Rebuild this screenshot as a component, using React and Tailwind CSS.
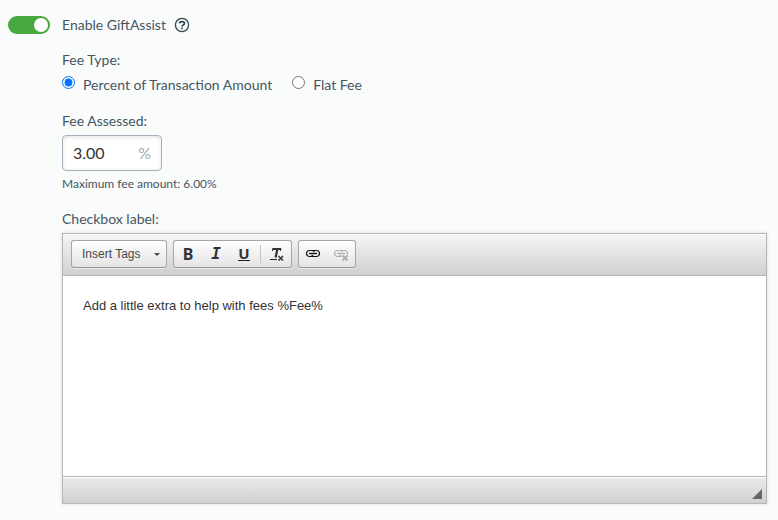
import React, { useState } from "react";

const ToolGroup = ({ children }) => (
  <div className="flex h-7 items-center rounded-[3px] border border-[#a6a6a6] border-b-[#979797] bg-gradient-to-b from-white to-[#e4e4e4] shadow-[0_1px_0_rgba(255,255,255,0.5)]">
    {children}
  </div>
);

const ToolButton = ({ label, disabled, children }) => (
  <button
    type="button"
    aria-label={label}
    disabled={disabled}
    className="flex h-6 w-7 items-center justify-center text-[#333] disabled:opacity-35"
  >
    {children}
  </button>
);

const ChainIcon = ({ broken }) => (
  <svg className="h-4 w-4" viewBox="0 0 16 16" fill="none" stroke="currentColor">
    <path
      d="M7 4.5H4A3 3 0 0 0 1.5 7.5A3 3 0 0 0 4 10.5H7Q8 10.5 8.6 9.8M9 10.5H12A3 3 0 0 0 14.5 7.5A3 3 0 0 0 12 4.5H9Q8 4.5 7.4 5.2M7 4.5Q8.6 4.5 9.3 6M9 10.5Q7.4 10.5 6.7 9"
      stroke={broken ? "currentColor" : "#111"}
      strokeWidth="1.2"
    />
    <path d="M4 7.5h8" stroke={broken ? "currentColor" : "#111"} strokeWidth="1.4" />
    {broken && (
      <>
        <path d="M8.5 8.5h7v6h-7z" fill="#f0f0f0" stroke="none" />
        <path d="M9.5 9.5l5 5M14.5 9.5l-5 5" strokeWidth="1.8" />
      </>
    )}
  </svg>
);

const Editor = () => {
  const [text, setText] = useState("Add a little extra to help with fees %Fee%");

  return (
    <div className="mt-1 border border-[#b6b6b6] bg-white font-['Liberation_Sans',Arial,sans-serif] shadow-[0_0_3px_rgba(0,0,0,0.15)]">
      {/* Toolbar */}
      <div className="flex flex-wrap gap-1.5 border-b border-[#b6b6b6] bg-gradient-to-b from-[#f5f5f5] to-[#cfd1cf] px-2 pt-1.5 pb-[7px] shadow-[inset_0_1px_0_#fff]">
        <ToolGroup>
          <button
            type="button"
            className="flex h-6 w-[94px] items-center justify-between pr-1.5 pl-2.5 text-xs text-[#474747]"
          >
            Insert Tags
            <svg className="h-[3px] w-[6px]" viewBox="0 0 6 3" fill="#474747">
              <path d="M0 0h6L3 3z" />
            </svg>
          </button>
        </ToolGroup>

        <ToolGroup>
          <ToolButton label="Bold">
            <span className="font-['Noto_Sans',sans-serif] text-base leading-5 font-bold">
              B
            </span>
          </ToolButton>
          <ToolButton label="Italic">
            <span className="font-['DejaVu_Sans_Mono',monospace] text-base leading-5 font-bold italic">
              I
            </span>
          </ToolButton>
          <ToolButton label="Underline">
            <span className="h-[14px] border-b border-[#222] font-['Noto_Sans',sans-serif] text-[15px] leading-3 font-bold">
              U
            </span>
          </ToolButton>
          <span className="mx-0.5 h-[18px] w-px bg-[#c4c4c4]" />
          <ToolButton label="Remove Format">
            <svg className="h-4 w-4" viewBox="0 0 16 16" fill="none" stroke="currentColor">
              <path d="M3.5 3h8.5M8.4 3L6.6 11.5" strokeWidth="2.2" />
              <path d="M4 2.5L3.4 5M12 2.5L11.4 5" strokeWidth="1" />
              <path d="M1 13.5h7" stroke="#222" strokeWidth="1" />
              <path d="M9.5 10l4.5 4.5M14 10L9.5 14.5" strokeWidth="1.5" />
            </svg>
          </ToolButton>
        </ToolGroup>

        <ToolGroup>
          <ToolButton label="Link">
            <ChainIcon />
          </ToolButton>
          <ToolButton label="Unlink" disabled>
            <ChainIcon broken />
          </ToolButton>
        </ToolGroup>
      </div>

      <textarea
        id="checkbox-label"
        value={text}
        onChange={(e) => setText(e.target.value)}
        className="block h-[200px] w-full resize-none bg-white p-5 text-[13px] leading-5 text-[#333] outline-none"
      />

      {/* Resize bar */}
      <div className="flex h-[27px] items-end justify-end border-t border-[#b6b6b6] bg-gradient-to-b from-[#ebebeb] to-[#cfd1cf] pr-1 pb-1 shadow-[inset_0_1px_0_#fff]">
        <svg className="h-[10px] w-[10px]" viewBox="0 0 10 10" fill="#666">
          <path d="M10 0v10H0z" />
        </svg>
      </div>
    </div>
  );
};

const App = () => {
  const [enabled, setEnabled] = useState(true);
  const [feeType, setFeeType] = useState("percent");
  const [fee, setFee] = useState("3.00");

  return (
    <main className="min-h-screen bg-[#fafcfb] pt-[15px] pr-[11px] pb-4 pl-2 font-['Lato',sans-serif] text-sm leading-5 text-[#455663]">
      {/* Enable switch */}
      <div className="flex h-5 items-center">
        <label className="flex cursor-pointer items-center gap-3">
          <input
            type="checkbox"
            role="switch"
            checked={enabled}
            onChange={(e) => setEnabled(e.target.checked)}
            className="peer sr-only"
          />
          <span className="flex h-[18px] w-[42px] items-center justify-start rounded-full bg-[#b8bfc4] px-0.5 peer-checked:justify-end peer-checked:bg-[#46a83f]">
            <span className="h-[14px] w-[14px] rounded-full bg-white" />
          </span>
          <span>Enable GiftAssist</span>
        </label>
        <button type="button" aria-label="Help" className="ml-2 text-[#344654]">
          <svg className="h-4 w-4" viewBox="0 0 16 16" fill="none" stroke="currentColor">
            <circle cx="8" cy="8" r="6.6" strokeWidth="1.3" />
            <path d="M5.5 6.3C5.7 4.1 10.5 4.1 10.5 6.4C10.5 8 8 7.9 8 9.6" strokeWidth="1.7" />
            <path d="M8 10.4v1.8" strokeWidth="1.7" />
          </svg>
        </button>
      </div>

      <div className="pl-[54px]">
        <fieldset className="mt-[15px]">
          <legend>Fee Type:</legend>
          <div className="mt-[5px] flex gap-5">
            <label className="flex gap-2">
              <input
                type="radio"
                name="feeType"
                checked={feeType === "percent"}
                onChange={() => setFeeType("percent")}
                className="mt-px h-[13px] w-[13px]"
              />
              Percent of Transaction Amount
            </label>
            <label className="flex gap-2">
              <input
                type="radio"
                name="feeType"
                checked={feeType === "flat"}
                onChange={() => setFeeType("flat")}
                className="mt-px h-[13px] w-[13px]"
              />
              Flat Fee
            </label>
          </div>
        </fieldset>

        <label htmlFor="fee" className="mt-4 block">
          Fee Assessed:
        </label>
        <div className="mt-1 flex h-9 w-[100px] items-center rounded-[4px] border border-[#a5b2bd] bg-white px-2.5 text-base shadow-[inset_0_1px_4px_rgba(0,0,0,0.12)]">
          <input
            id="fee"
            type="text"
            value={fee}
            onChange={(e) => setFee(e.target.value)}
            className="min-w-0 flex-1 bg-transparent text-[#333] outline-none"
          />
          <span className="text-[#a0a8ae]">%</span>
        </div>
        <p className="mt-[5px] text-xs leading-4">Maximum fee amount: 6.00%</p>

        <label htmlFor="checkbox-label" className="mt-[17px] block">
          Checkbox label:
        </label>
        <Editor />
      </div>
    </main>
  );
};

export default App;
